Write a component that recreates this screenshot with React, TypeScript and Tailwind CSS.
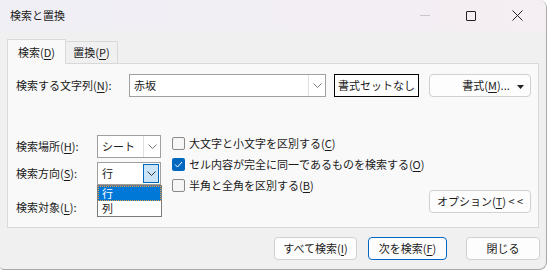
import React from 'react';

const font = { fontFamily: '"Noto Sans CJK JP", "Noto Sans", sans-serif' };

function Chevron({ className = '' }: { className?: string }) {
  return (
    <svg width="9" height="5" viewBox="0 0 9 5" className={className}>
      <path d="M0.5 0.5 L4.5 4.5 L8.5 0.5" fill="none" stroke="currentColor" strokeWidth="1" />
    </svg>
  );
}

function Key({ k }: { k: string }) {
  return (
    <>
      (<span className="underline underline-offset-2">{k}</span>)
    </>
  );
}

function Select({ value, active = false }: { value: string; active?: boolean }) {
  return (
    <div className="flex h-[23px] w-[64px] border border-[#a0a0a0] bg-white">
      <div className="flex flex-1 items-center pl-[4px] text-[11px]">{value}</div>
      {active ? (
        <div className="my-[1px] mr-[1px] flex w-[16px] items-center justify-center border border-[#0067c0] bg-[#cce4f7] text-[#333]">
          <Chevron />
        </div>
      ) : (
        <div className="flex w-[17px] items-center justify-center border-l border-[#e0e0e0] text-[#777]">
          <Chevron />
        </div>
      )}
    </div>
  );
}

function Check({ checked = false, label }: { checked?: boolean; label: React.ReactNode }) {
  return (
    <div className="flex h-[21px] items-center gap-[4px]">
      {checked ? (
        <div className="flex h-[13px] w-[13px] items-center justify-center rounded-[2px] bg-[#0067c0]">
          <svg width="9" height="7" viewBox="0 0 9 7">
            <path d="M1 3.5 L3.5 6 L8 1" fill="none" stroke="white" strokeWidth="1" />
          </svg>
        </div>
      ) : (
        <div className="h-[13px] w-[13px] rounded-[2px] border border-[#8a8a8a] bg-[#f6f6f6]" />
      )}
      <span className="text-[11px]">{label}</span>
    </div>
  );
}

function Btn({ children, w, primary = false }: { children: React.ReactNode; w: string; primary?: boolean }) {
  return (
    <div
      className={`flex h-[23px] items-center justify-center rounded-[4px] border bg-[#fdfdfd] text-[11px] ${w} ${
        primary ? 'border-[#0067c0]' : 'border-[#d0d0d0]'
      }`}
    >
      {children}
    </div>
  );
}

export default function App() {
  return (
    <div className="h-[273px] w-[549px] bg-white text-[#1a1a1a]" style={font}>
      <div className="flex h-[270px] w-[547px] flex-col overflow-hidden rounded-r-[8px] rounded-bl-[4px] border-r border-b border-[#a8a8a8] bg-[#f0f0f0]">
        {/* title bar */}
        <div className="flex h-[31px] items-center bg-gradient-to-r from-[#efeff5] to-[#f5eef3]">
          <span className="pl-[10px] text-[11px]">検索と置換</span>
          <div className="ml-auto flex h-full items-center">
            <div className="flex w-[46px] justify-center">
              <div className="h-[1px] w-[10px] bg-[#c8c8c8]" />
            </div>
            <div className="flex w-[46px] justify-center">
              <div className="h-[10px] w-[10px] rounded-[1px] border border-[#222]" />
            </div>
            <div className="flex w-[46px] justify-center">
              <svg width="11" height="11" viewBox="0 0 11 11">
                <path d="M0.5 0.5 L10.5 10.5 M10.5 0.5 L0.5 10.5" stroke="#222" strokeWidth="1" />
              </svg>
            </div>
            <div className="w-[6px]" />
          </div>
        </div>

        {/* tabs */}
        <div className="ml-[7px] mt-[8px] flex h-[24px] items-end">
          <div className="relative z-10 -mb-[1px] flex h-[25px] w-[59px] items-center justify-center border border-b-0 border-[#d9d9d9] bg-[#f9f9f9] text-[11px]">
            検索<Key k="D" />
          </div>
          <div className="flex h-[22px] w-[52px] items-center justify-center border border-l-0 border-b-0 border-[#d9d9d9] text-[11px]">
            置換<Key k="P" />
          </div>
        </div>

        {/* panel */}
        <div className="mx-[7px] flex h-[165px] flex-col border border-[#d9d9d9] bg-[#f9f9f9] pl-[8px] pr-[7px] pt-[10px]">
          <div className="flex h-[23px] items-center">
            <span className="w-[113px] text-[11px]">
              検索する文字列<Key k="N" />:
            </span>
            <div className="flex h-[23px] w-[197px] border border-[#a0a0a0] bg-white">
              <div className="flex flex-1 items-center pl-[4px] text-[11px]">赤坂</div>
              <div className="flex w-[17px] items-center justify-center border-l border-[#e0e0e0] text-[#777]">
                <Chevron />
              </div>
            </div>
            <div className="ml-[8px] flex h-[23px] w-[85px] items-center justify-center border border-black bg-white text-[11px]">
              書式セットなし
            </div>
            <div className="relative ml-auto flex h-[23px] w-[102px] items-center justify-center rounded-[4px] border border-[#d0d0d0] bg-[#fdfdfd] text-[11px]">
              <span className="pl-[12px]">
                書式<Key k="M" />...
              </span>
              <svg width="7" height="4" viewBox="0 0 7 4" className="absolute right-[6px] top-[10px]">
                <path d="M0 0 L7 0 L3.5 4 Z" fill="#222" />
              </svg>
            </div>
          </div>

          <div className="mt-[38px] flex">
            <div className="flex w-[156px] flex-col gap-[4px]">
              <div className="flex items-center">
                <span className="w-[81px] text-[11px]">
                  検索場所<Key k="H" />:
                </span>
                <Select value="シート" />
              </div>
              <div className="relative flex items-center">
                <span className="w-[81px] text-[11px]">
                  検索方向<Key k="S" />:
                </span>
                <Select value="行" active />
                <div className="absolute left-[81px] top-[23px] z-10 flex w-[65px] flex-col border border-[#7a7a7a] bg-white text-[11px]">
                  <div className="flex h-[15px] items-center border border-dotted border-[#e8a040] bg-[#0078d7] pl-[3px] text-white">
                    行
                  </div>
                  <div className="flex h-[15px] items-center pl-[4px]">列</div>
                </div>
              </div>
              <div className="flex h-[26px] items-end">
                <span className="text-[11px]">
                  検索対象<Key k="L" />:
                </span>
              </div>
            </div>
            <div className="-mt-[2px] flex flex-col">
              <Check label={<>大文字と小文字を区別する<Key k="C" /></>} />
              <Check checked label={<>セル内容が完全に同一であるものを検索する<Key k="O" /></>} />
              <Check label={<>半角と全角を区別する<Key k="B" /></>} />
            </div>
            <div className="mb-[2px] ml-auto self-end">
              <Btn w="w-[102px]">
                オプション<Key k="T" />&nbsp;&lt; &lt;
              </Btn>
            </div>
          </div>
        </div>

        {/* bottom buttons */}
        <div className="mr-[6px] mt-[9px] flex justify-end">
          <Btn w="w-[83px]">
            すべて検索<Key k="I" />
          </Btn>
          <div className="w-[11px]" />
          <Btn w="w-[79px]" primary>
            次を検索<Key k="F" />
          </Btn>
          <div className="w-[19px]" />
          <Btn w="w-[74px]">閉じる</Btn>
        </div>
      </div>
    </div>
  );
}
